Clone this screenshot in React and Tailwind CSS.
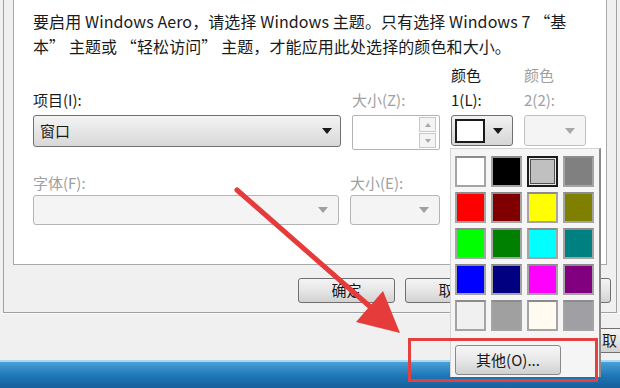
const swatches = [
  '#ffffff', '#000000', '#c0c0c0', '#808080',
  '#ff0000', '#800000', '#ffff00', '#808000',
  '#00ff00', '#008000', '#00ffff', '#008080',
  '#0000ff', '#000080', '#ff00ff', '#800080',
  '#f0f0f0', '#a0a0a0', '#fffbf0', '#a0a0a4',
];

const Arrow = ({ color = '#1a1a1a' }) => (
  <svg width="10" height="6" viewBox="0 0 10 6"><path d="M0 0 L10 0 L5 6 Z" fill={color} /></svg>
);

const WinButton = ({ children, className = '' }) => (
  <div className={`h-[25px] flex items-center justify-center rounded-[3px] border border-[#707070] bg-gradient-to-b from-[#f4f4f4] via-[#e6e6e6] to-[#d2d2d2] text-[15px] text-[#1a1a1a] ${className}`}>
    {children}
  </div>
);

const DisabledSelect = ({ className = '' }) => (
  <div className={`h-[30px] flex items-center justify-end pr-[10px] rounded-[3px] border border-[#b4b4b4] bg-[#f4f4f4] ${className}`}>
    <Arrow color="#a0a0a0" />
  </div>
);

export default function App() {
  return (
    <div className="w-[620px] h-[388px] relative overflow-hidden bg-[#f0f0f0] text-[#1a1a1a]" style={{ fontFamily: '"Noto Sans CJK SC", "Noto Sans", sans-serif' }}>
      {/* dialog frame */}
      <div className="ml-[3px] w-[614px] h-[313px] border-l border-r border-b border-[#a0a0a0] bg-[#f0f0f0]">
        <div className="mx-[9px] h-[265px] border-l border-r border-b border-[#a8a8a8] bg-white pl-[19px] pt-[9px]">
          <p className="text-[16px] leading-[25px] tracking-[0.1px]">
            要启用 Windows Aero，请选择 Windows 主题。只有选择 Windows 7 “基<br />
            本” 主题或 “轻松访问” 主题，才能应用此处选择的颜色和大小。
          </p>

          <div className="grid grid-cols-[308px_88px_62px_62px] gap-x-[11px] mt-[3px] text-[15px] leading-[25px] items-end">
            <div>项目(I):</div>
            <div className="text-[#a0a0a0]">大小(Z):</div>
            <div>颜色<br />1(L):</div>
            <div className="text-[#a0a0a0]">颜色<br />2(2):</div>
          </div>

          <div className="grid grid-cols-[308px_88px_62px_62px] gap-x-[11px] mt-[3px] items-start">
            <div className="h-[32px] flex items-center justify-between pl-[6px] pr-[8px] rounded-[3px] border border-[#707070] bg-gradient-to-b from-[#f4f4f4] to-[#d8d8d8] text-[15px]">
              <span>窗口</span>
              <Arrow />
            </div>
            <div className="h-[35px] rounded-[2px] border border-[#b4b4b4] bg-white flex justify-end items-center pr-[3px]">
              <div className="flex flex-col gap-[1px]">
                <div className="w-[17px] h-[15px] border border-[#c8c8c8] bg-[#f4f4f4] flex items-center justify-center">
                  <svg width="6" height="4" viewBox="0 0 6 4"><path d="M0 4 L6 4 L3 0 Z" fill="#a8a8a8" /></svg>
                </div>
                <div className="w-[17px] h-[15px] border border-[#c8c8c8] bg-[#f4f4f4] flex items-center justify-center">
                  <svg width="6" height="4" viewBox="0 0 6 4"><path d="M0 0 L6 0 L3 4 Z" fill="#a8a8a8" /></svg>
                </div>
              </div>
            </div>
            <div className="h-[31px] flex items-center gap-[8px] pl-[3px] rounded-[3px] border border-[#707070] bg-gradient-to-b from-[#f2f2f2] to-[#d6d6d6]">
              <div className="w-[30px] h-[24px] border-2 border-[#1a1a1a] bg-white" />
              <Arrow />
            </div>
            <div className="h-[31px] flex items-center justify-end pr-[10px] rounded-[3px] border border-[#c0c0c0] bg-[#f4f4f4]">
              <Arrow color="#a8a8a8" />
            </div>
          </div>

          <div className="grid grid-cols-[306px_90px] gap-x-[11px] mt-[20px] text-[15px] leading-[25px] text-[#a0a0a0]">
            <div>字体(F):</div>
            <div>大小(E):</div>
          </div>
          <div className="grid grid-cols-[306px_90px] gap-x-[11px]">
            <DisabledSelect />
            <DisabledSelect />
          </div>
        </div>

        <div className="flex gap-[10px] mt-[13px] ml-[294px]">
          <WinButton className="w-[97px]">确定</WinButton>
          <WinButton className="w-[97px]">取消</WinButton>
          <WinButton className="w-[99px]">应用(A)</WinButton>
        </div>
      </div>

      {/* outer window area */}
      <div className="h-[47px] border-t border-[#fafafa] flex items-start">
        <WinButton className="w-[80px] mt-[14px] ml-[597px] shrink-0 justify-start pl-[4px]">取</WinButton>
      </div>

      {/* taskbar */}
      <div className="h-[28px] border-t-2 border-[#a8d8f0] bg-gradient-to-b from-[#4aa0d8] via-[#1e78b8] to-[#17609a]" />

      {/* colour popup */}
      <div className="absolute left-[450px] top-[148px] w-[151px] h-[229px] bg-[#f5f5f5] border-l border-t border-[#d4d4d4] border-r-2 border-r-[#8a8a8a] pl-[4px] pt-[7px]">
        <div className="grid grid-cols-[31px_31px_31px_31px] gap-x-[5px] gap-y-[5px]">
          {swatches.map((c, i) =>
            i === 2 ? (
              <div key={i} className="w-[31px] h-[31px] border-2 border-[#1a1a1a] p-[1px] bg-[#e8e8e8]">
                <div className="w-full h-full border border-[#505050]" style={{ background: c }} />
              </div>
            ) : (
              <div key={i} className="w-[31px] h-[31px] border-2 border-[#a4a4a4] border-t-[#8c8c8c]" style={{ background: c }} />
            )
          )}
        </div>
        <div className="mt-[14px] w-[106px] h-[30px] flex items-center justify-center rounded-[3px] border border-[#8a8a8a] bg-gradient-to-b from-[#f6f6f6] via-[#e8e8e8] to-[#d0d0d0] text-[15px] text-[#1a1a1a]">
          其他(O)...
        </div>
      </div>

      {/* red annotation */}
      <div className="absolute left-[408px] top-[338px] w-[190px] h-[44px] border-[3px] border-[#e3403f]" />
      <svg className="absolute left-0 top-0" width="620" height="388" viewBox="0 0 620 388">
        <line x1="237" y1="190" x2="375" y2="311" stroke="#e53b3b" strokeWidth="5" strokeLinecap="round" />
        <path d="M400 333 L356 322 L383 291 Z" fill="#e53b3b" />
      </svg>
    </div>
  );
}
